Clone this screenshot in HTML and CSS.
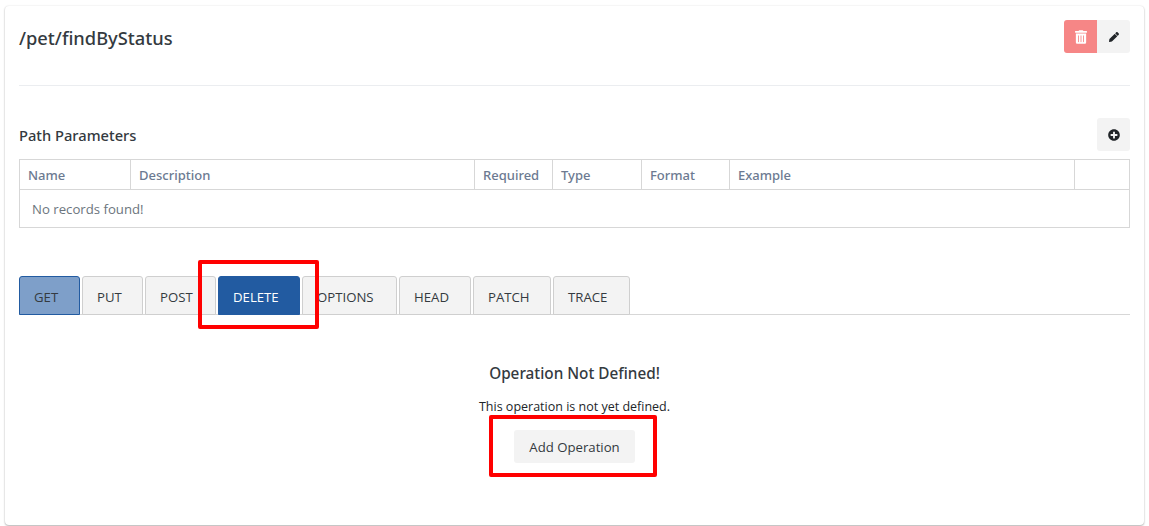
FILE: index.html
```html
<!DOCTYPE html>
<html lang="en">
<head>
<meta charset="utf-8">
<title>/pet/findByStatus</title>
<link rel="stylesheet" href="styles.css">
</head>
<body>
<main class="card">
  <header class="head">
    <h1 class="title">/pet/findByStatus</h1>
    <div class="btn-group">
      <button class="btn btn-danger" aria-label="Delete">
        <svg class="ico-trash" viewBox="0 0 448 512"><path fill="currentColor" d="M32 464a48 48 0 0 0 48 48h288a48 48 0 0 0 48-48V128H32zm272-256a16 16 0 0 1 32 0v224a16 16 0 0 1-32 0zm-96 0a16 16 0 0 1 32 0v224a16 16 0 0 1-32 0zm-96 0a16 16 0 0 1 32 0v224a16 16 0 0 1-32 0zM432 32H312l-9.400-18.700A24 24 0 0 0 281.100 0H166.800a23.700 23.700 0 0 0-21.400 13.300L136 32H16A16 16 0 0 0 0 48v32a16 16 0 0 0 16 16h416a16 16 0 0 0 16-16V48a16 16 0 0 0-16-16z"/></svg>
      </button>
      <button class="btn" aria-label="Edit">
        <svg class="ico-pencil" viewBox="0 0 512 512"><path fill="currentColor" d="M497.900 142.100l-46.100 46.100c-4.700 4.700-12.300 4.700-17 0l-111-111c-4.700-4.700-4.700-12.300 0-17l46.100-46.100c18.700-18.700 49.100-18.700 67.900 0l60.100 60.100c18.800 18.700 18.800 49.100 0 67.900zM284.200 99.800L21.600 362.400.4 483.900c-2.900 16.400 11.400 30.600 27.800 27.800l121.500-21.300 262.600-262.600c4.700-4.700 4.700-12.300 0-17l-111-111c-4.800-4.700-12.400-4.700-17.100 0z"/></svg>
      </button>
    </div>
  </header>
  <hr class="rule">
  <div class="section-head">
    <h2 class="section-title">Path Parameters</h2>
    <button class="btn" aria-label="Add">
      <svg class="ico" viewBox="0 0 512 512"><path fill="currentColor" d="M256 8C119 8 8 119 8 256s111 248 248 248 248-111 248-248S393 8 256 8zm144 276c0 6.600-5.400 12-12 12h-92v92c0 6.600-5.400 12-12 12h-56c-6.600 0-12-5.400-12-12v-92h-92c-6.600 0-12-5.400-12-12v-56c0-6.600 5.400-12 12-12h92v-92c0-6.600 5.400-12 12-12h56c6.600 0 12 5.400 12 12v92h92c6.600 0 12 5.400 12 12z"/></svg>
    </button>
  </div>
  <table class="table">
    <colgroup>
      <col class="c-name"><col class="c-desc"><col class="c-req"><col class="c-type"><col class="c-format"><col class="c-example"><col class="c-last">
    </colgroup>
    <thead>
      <tr><th>Name</th><th>Description</th><th>Required</th><th>Type</th><th>Format</th><th>Example</th><th></th></tr>
    </thead>
    <tbody>
      <tr><td colspan="7">No records found!</td></tr>
    </tbody>
  </table>
  <nav class="tabs">
    <a class="tab tab-get">GET</a>
    <a class="tab tab-put">PUT</a>
    <a class="tab tab-post">POST</a>
    <a class="tab tab-delete">DELETE</a>
    <a class="tab tab-options">OPTIONS</a>
    <a class="tab tab-head">HEAD</a>
    <a class="tab tab-patch">PATCH</a>
    <a class="tab tab-trace">TRACE</a>
  </nav>
  <section class="empty">
    <h3 class="empty-title">Operation Not Defined!</h3>
    <p class="empty-text">This operation is not yet defined.</p>
    <button class="btn btn-wide">Add Operation</button>
  </section>
</main>
<div class="mark mark-tab"></div>
<div class="mark mark-add"></div>
</body>
</html>
```
FILE: styles.css
```css
* { box-sizing: border-box; }
html, body { height: 100%; }
body {
  margin: 0;
  padding: 6px 5px 1px;
  background: #fff;
  font-family: "Open Sans", "Noto Sans", sans-serif;
  font-size: 13px;
  color: #212529;
  overflow: hidden;
  position: relative;
}
.card {
  height: 519px;
  padding: 14px 14px 0;
  background: #fff;
  border-radius: 4px;
  box-shadow: 0 1px 2px rgba(0,0,0,.28), 0 0 2px rgba(0,0,0,.1);
}
.head {
  display: flex;
  justify-content: space-between;
  align-items: flex-start;
  height: 65px;
}
.title {
  margin: 6px 0 0;
  font-family: "Noto Sans", "Open Sans", sans-serif;
  font-size: 18.300px;
  line-height: 24px;
  font-weight: 500;
  color: #343a40;
}
.btn-group { display: flex; }
.btn-group .btn:first-child { border-radius: 3px 0 0 3px; }
.btn-group .btn:last-child { border-radius: 0 3px 3px 0; }
.btn {
  display: flex;
  align-items: center;
  justify-content: center;
  width: 33px;
  height: 33px;
  padding: 0;
  border: 0;
  border-radius: 3px;
  background: #f3f3f3;
  color: #212529;
  font: inherit;
}
.btn-danger { background: #f68686; color: #fff; }
.ico { width: 12px; height: 12px; }
.ico-pencil { width: 10px; height: 10px; }
.ico-trash { width: 12px; height: 14px; }
.rule {
  margin: 0;
  height: 1px;
  border: 0;
  background: #ebedf0;
}
.section-head {
  display: flex;
  justify-content: space-between;
  align-items: center;
  margin-top: 32px;
  height: 33px;
}
.section-title {
  margin: 1px 0 0;
  font-family: "Noto Sans", "Open Sans", sans-serif;
  font-size: 14.700px;
  font-weight: 500;
  color: #343a40;
}
.table {
  width: 1110px;
  margin-top: 8px;
  border-collapse: collapse;
  table-layout: fixed;
  font-size: 13px;
}
.c-name { width: 111px; }
.c-desc { width: 344px; }
.c-req { width: 78px; }
.c-type { width: 89px; }
.c-format { width: 88px; }
.c-example { width: 345px; }
.c-last { width: 55px; }
.table th, .table td { border: 1px solid #d7d7d7; }
.table th {
  height: 30px;
  padding: 0 8px;
  text-align: left;
  font-family: "Noto Sans", "Open Sans", sans-serif;
  font-weight: 500;
  color: #6c7a91;
}
.table td {
  height: 38px;
  padding: 0 12px;
  color: #6c757d;
  font-size: 13.200px;
}
.tabs {
  display: flex;
  gap: 2px;
  margin-top: 48px;
  height: 39px;
  border-bottom: 1px solid #d7d7d7;
}
.tab {
  display: flex;
  align-items: center;
  height: 39px;
  padding: 2px 0 0 14px;
  border: 1px solid #cfcfcf;
  border-radius: 3px 3px 0 0;
  background: #f3f3f3;
  color: #343a40;
  font-size: 13.200px;
}
.tab-get { width: 61px; background: #7e9fc9; border-color: #225ba1; color: #343a40; }
.tab-put { width: 61px; }
.tab-post { width: 71px; }
.tab-delete { width: 82px; background: #225ba1; border-color: #225ba1; color: #fff; }
.tab-options { width: 95px; }
.tab-head { width: 72px; }
.tab-patch { width: 78px; }
.tab-trace { width: 77px; }
.empty {
  display: flex;
  flex-direction: column;
  align-items: center;
  padding-top: 48px;
}
.empty-title {
  margin: 0;
  font-family: "Noto Sans", "Open Sans", sans-serif;
  font-size: 15.300px;
  line-height: 20px;
  font-weight: 500;
  color: #343a40;
}
.empty-text {
  margin: 15px 0 0;
  font-size: 12.500px;
  line-height: 17px;
  color: #212529;
}
.btn-wide {
  width: 121px;
  margin-top: 15px;
  font-size: 13.200px;
  color: #343a40;
}
.mark {
  position: absolute;
  border: 4px solid #f00;
  border-radius: 2px;
}
.mark-tab { left: 198px; top: 260px; width: 121px; height: 69px; }
.mark-add { left: 489px; top: 415px; width: 168px; height: 62px; }
```
